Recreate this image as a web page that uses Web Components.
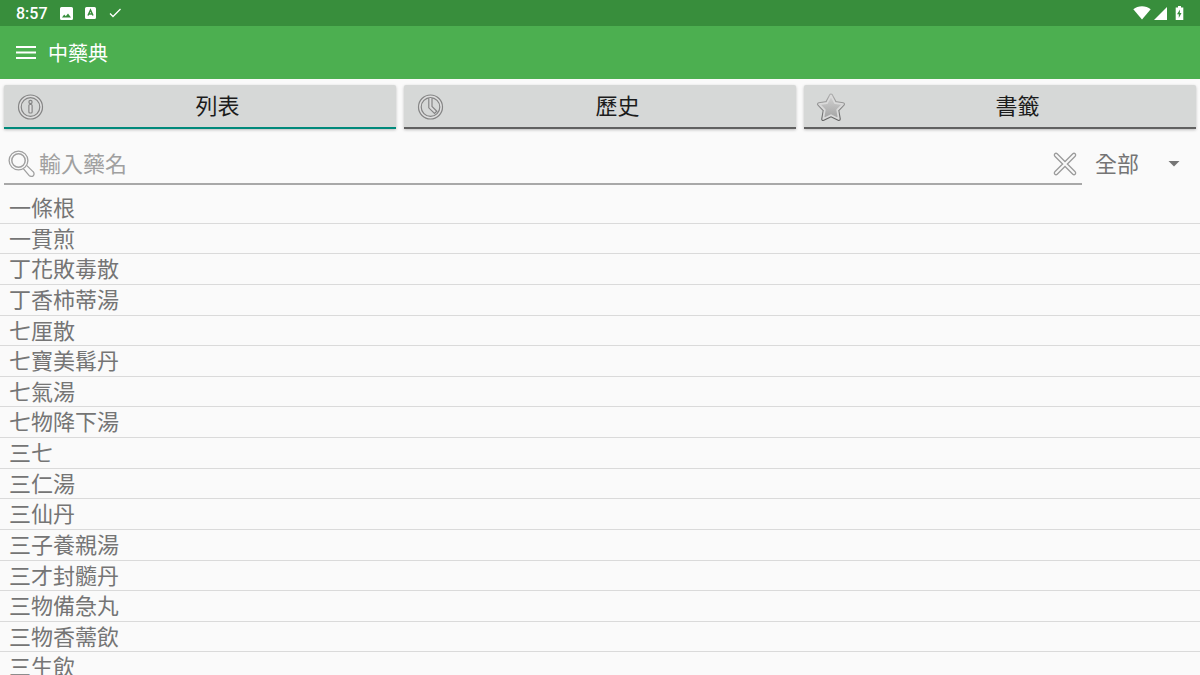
<!DOCTYPE html>
<html lang="zh-Hant">
<head>
<meta charset="utf-8">
<meta name="viewport" content="width=device-width, initial-scale=1">
<title>中藥典</title>
<style>
	body {
		margin: 0;
		background: #fafafa;
		color: #757575;
		font-family: Roboto, "Noto Sans CJK TC", sans-serif;
		font-size: 22px;
	}
</style>
</head>
<body>
<herb-app></herb-app>

<script>
	class StatusBar extends HTMLElement {
		constructor() {
			super();
			this.attachShadow({ mode: 'open' });
			this.shadowRoot.innerHTML = `
				<style>
					:host {
						display: flex;
						align-items: center;
						height: 26px;
						padding: 0 16px;
						background: #388e3c;
						color: #fff;
						font-size: 16px;
						font-weight: 500;
						line-height: 24px;
					}
					time {
						padding-top: 2px;
					}
					svg {
						display: block;
						fill: currentColor;
					}
					.notices {
						display: flex;
						align-items: center;
						gap: 12px;
						margin-left: 12px;
					}
					.system {
						display: flex;
						align-items: center;
						gap: 3px;
						margin-left: auto;
					}
				</style>
				<time>8:57</time>
				<div class="notices">
					<svg width="13" height="13" viewBox="0 0 13 13"><path fill-rule="evenodd" d="M1.5 0h10A1.5 1.5 0 0 1 13 1.5v10a1.5 1.5 0 0 1-1.5 1.5h-10A1.5 1.5 0 0 1 0 11.5v-10A1.5 1.5 0 0 1 1.5 0zM2 10.5h9L8 6.5 5.8 9.3 4.2 7.5z"/></svg>
					<svg width="12" height="12" viewBox="0 0 12 12"><path d="M1.5 0h8A1.5 1.5 0 0 1 11 1.5v9a1.5 1.5 0 0 1-1.5 1.5h-8A1.5 1.5 0 0 1 0 10.5v-9A1.5 1.5 0 0 1 1.5 0z"/><path d="M3 8.5 5.5 3 8 8.5M4 7h3" fill="none" stroke="#388e3c" stroke-width="1.5"/></svg>
					<svg width="13" height="12" viewBox="0 0 13 12"><path d="M1 6.5 4 9.5 11.5 2" fill="none" stroke="currentColor" stroke-width="1.3"/></svg>
				</div>
				<div class="system">
					<svg width="18" height="14" viewBox="0 0 18 14"><path d="M9 13.5.3 3.3C5-.9 13-.9 17.7 3.3z"/></svg>
					<svg width="13" height="13" viewBox="0 0 13 13"><path d="M13 0v13H0z"/></svg>
					<svg width="14" height="14" viewBox="0 0 14 14"><path d="M8 0h3v1.5h2.3V14H5.7V1.5H8z"/><path d="M10 3.5 7 8.3h1.8V12L11.5 7H9.8z" fill="#388e3c"/></svg>
				</div>
			`;
		}
	}

	class AppBar extends HTMLElement {
		constructor() {
			super();
			this.attachShadow({ mode: 'open' });
			this.shadowRoot.innerHTML = `
				<style>
					:host {
						display: flex;
						align-items: center;
						gap: 12px;
						height: 53px;
						padding: 0 16px;
						background: #4caf50;
						color: #fff;
					}
					button {
						padding: 0;
						border: 0;
						background: none;
						color: inherit;
					}
					svg {
						display: block;
					}
					h1 {
						margin: 0;
						font-size: 20px;
						font-weight: 400;
					}
				</style>
				<button type="button" aria-label="選單">
					<svg width="20" height="14" viewBox="0 0 20 14"><path d="M0 1h20M0 6.5h20M0 12h20" stroke="currentColor" stroke-width="2"/></svg>
				</button>
				<h1><slot></slot></h1>
			`;
		}
	}

	class TabButton extends HTMLElement {
		constructor() {
			super();
			this.attachShadow({ mode: 'open' });
			this.shadowRoot.innerHTML = `
				<style>
					:host {
						display: block;
					}
					button {
						display: flex;
						align-items: center;
						width: 100%;
						height: 44px;
						padding: 2px 7px 0 12px;
						border: 0;
						border-bottom: 2px solid #616161;
						border-radius: 2px 2px 0 0;
						background: #d6d8d7;
						box-shadow: 0 1px 3px rgba(0, 0, 0, 0.25);
						color: #1c1c1c;
						font: inherit;
						line-height: 24px;
					}
					:host([active]) button {
						border-bottom-color: #00897b;
					}
					::slotted(svg) {
						flex: none;
						display: block;
					}
					span {
						flex: 1;
						text-align: center;
					}
				</style>
				<button type="button"><slot name="icon"></slot><span><slot></slot></span></button>
			`;
		}

		connectedCallback() {
			this.shadowRoot.querySelector('button').addEventListener('click', this._select.bind(this));
		}

		//only one tab is active at a time
		_select() {
			this.parentNode.querySelectorAll('tab-button').forEach((tab) => tab.removeAttribute('active'));
			this.setAttribute('active', '');
		}
	}

	class SearchBar extends HTMLElement {
		constructor() {
			super();
			this.attachShadow({ mode: 'open' });
			this.shadowRoot.innerHTML = `
				<style>
					:host {
						display: flex;
						align-items: center;
						gap: 13px;
						padding: 0 4px;
					}
					.field {
						flex: 1;
						display: flex;
						align-items: center;
						height: 38px;
						padding: 4px 4px 0;
						border-bottom: 2px solid #a8a8a8;
					}
					svg {
						display: block;
						flex: none;
					}
					input {
						flex: 1;
						min-width: 0;
						padding: 0 3px;
						border: 0;
						outline: 0;
						background: none;
						color: #424242;
						font: inherit;
					}
					input::placeholder {
						color: #a0a0a0;
					}
					.clear {
						padding: 0;
						border: 0;
						background: none;
					}
					.spinner {
						display: grid;
						align-items: center;
						width: 101px;
					}
					select {
						grid-area: 1 / 1;
						appearance: none;
						padding: 2px 0 0;
						border: 0;
						background: none;
						color: #757575;
						font: inherit;
					}
					.spinner svg {
						grid-area: 1 / 1;
						justify-self: end;
						margin: 2px 16px 0 0;
						pointer-events: none;
					}
				</style>
				<div class="field">
					<svg width="28" height="28" viewBox="0 0 28 28" fill="none" stroke="#a0a0a0" stroke-width="1.3">
						<circle cx="10.5" cy="10.5" r="9.4"/>
						<circle cx="10.5" cy="10.5" r="6.7" stroke-width="1.5"/>
						<path d="M15.3 18.6 21 25.4C22.2 26.7 24.2 26.8 25.3 25.7 26.4 24.6 26.3 22.8 25 21.6L18.6 15.4"/>
					</svg>
					<input type="text" placeholder="輸入藥名" aria-label="輸入藥名">
					<button class="clear" type="button" aria-label="清除">
						<svg width="26" height="26" viewBox="0 0 26 26" stroke-linecap="round">
							<path d="M4 4 22 22M22 4 4 22" stroke="#9b9b9b" stroke-width="4.6"/>
							<path d="M4 4 22 22M22 4 4 22" stroke="#fafafa" stroke-width="2"/>
						</svg>
					</button>
				</div>
				<div class="spinner">
					<select aria-label="分類"><option>全部</option></select>
					<svg width="12" height="6" viewBox="0 0 12 6"><path d="M.5 0h11L6 5.6z" fill="#757575"/></svg>
				</div>
			`;
			this.input = this.shadowRoot.querySelector('input');
			this.shadowRoot.querySelector('.clear').addEventListener('click', this._clear.bind(this));
		}

		_clear() {
			this.input.value = '';
			this.input.focus();
		}
	}

	class HerbList extends HTMLElement {
		constructor() {
			super();
			this.attachShadow({ mode: 'open' });
			this.shadowRoot.innerHTML = `
				<style>
					:host {
						display: grid;
					}
					ul {
						display: grid;
						grid-auto-rows: minmax(30px, 1fr);
						margin: 0;
						padding: 0;
						list-style: none;
					}
					li {
						padding: 2px 0 0 9px;
						border-bottom: 1px solid #dadada;
						line-height: 27px;
					}
				</style>
				<ul></ul>
			`;
		}

		set items(names) {
			const list = this.shadowRoot.querySelector('ul');
			list.replaceChildren(...names.map((name) => {
				const item = document.createElement('li');
				item.textContent = name;
				return item;
			}));
		}
	}

	class HerbApp extends HTMLElement {
		constructor() {
			super();
			this.attachShadow({ mode: 'open' });
			this.shadowRoot.innerHTML = `
				<style>
					:host {
						display: flex;
						flex-direction: column;
						height: 100vh;
						overflow: hidden;
					}
					status-bar, app-bar, nav, search-bar {
						flex: none;
					}
					status-bar, app-bar {
						box-sizing: border-box;
					}
					nav {
						display: grid;
						grid-template-columns: repeat(3, 1fr);
						gap: 8px;
						padding: 6px 4px 12px;
					}
					/* the last row runs past the lower edge */
					herb-list {
						flex: 1;
						min-height: 0;
						margin: 8px 0 -8px;
					}
				</style>
				<status-bar></status-bar>
				<app-bar>中藥典</app-bar>
				<nav>
					<tab-button active>
						<svg slot="icon" width="30" height="30" viewBox="0 0 30 30" fill="none" stroke="#858585" stroke-width="1.2">
							<circle cx="14.5" cy="15" r="10.7" stroke="#dedede" stroke-width="2"/>
							<circle cx="14.5" cy="15" r="12"/>
							<circle cx="14.5" cy="15" r="9.3"/>
							<circle cx="14.5" cy="10" r="1.6"/>
							<rect x="12.9" y="12.5" width="3.2" height="8.5" rx="1" fill="#e0e0e0"/>
						</svg>
						列表
					</tab-button>
					<tab-button>
						<svg slot="icon" width="30" height="30" viewBox="0 0 30 30" fill="none" stroke="#858585" stroke-width="1.2">
							<circle cx="14.5" cy="15" r="10.7" stroke="#dedede" stroke-width="2"/>
							<circle cx="14.5" cy="15" r="12"/>
							<circle cx="14.5" cy="15" r="9.3"/>
							<path d="M12.8 6v9.8l5.7 5.7 2.3-2.3-4.8-4.7V6" fill="#dcdcdc"/>
						</svg>
						歷史
					</tab-button>
					<tab-button>
						<svg slot="icon" width="30" height="30" viewBox="0 0 30 30" stroke-linejoin="round">
							<defs>
								<linearGradient id="star" x1="0" y1="0" x2="0" y2="1">
									<stop offset="0" stop-color="#d2d2d2"/>
									<stop offset="1" stop-color="#a2a2a2"/>
								</linearGradient>
								<linearGradient id="edge" x1="0" y1="0" x2="0" y2="1">
									<stop offset="0" stop-color="#acacac"/>
									<stop offset="1" stop-color="#666"/>
								</linearGradient>
							</defs>
							<path d="M15 3.5 19 11 27 12.2 21.3 18 22.8 27 15 23.2 7.2 27 8.7 18 3 12.2 11 11z" fill="none" stroke="url(#edge)" stroke-width="4"/>
							<path d="M15 3.5 19 11 27 12.2 21.3 18 22.8 27 15 23.2 7.2 27 8.7 18 3 12.2 11 11z" fill="url(#star)" stroke="#dadada" stroke-width="1.8"/>
						</svg>
						書籤
					</tab-button>
				</nav>
				<search-bar></search-bar>
				<herb-list></herb-list>
			`;
		}

		connectedCallback() {
			this.shadowRoot.querySelector('herb-list').items = [
				'一條根',
				'一貫煎',
				'丁花敗毒散',
				'丁香柿蒂湯',
				'七厘散',
				'七寶美髯丹',
				'七氣湯',
				'七物降下湯',
				'三七',
				'三仁湯',
				'三仙丹',
				'三子養親湯',
				'三才封髓丹',
				'三物備急丸',
				'三物香薷飲',
				'三生飲'
			];
		}
	}

	customElements.define('status-bar', StatusBar);
	customElements.define('app-bar', AppBar);
	customElements.define('tab-button', TabButton);
	customElements.define('search-bar', SearchBar);
	customElements.define('herb-list', HerbList);
	customElements.define('herb-app', HerbApp);
</script>
</body>
</html>
